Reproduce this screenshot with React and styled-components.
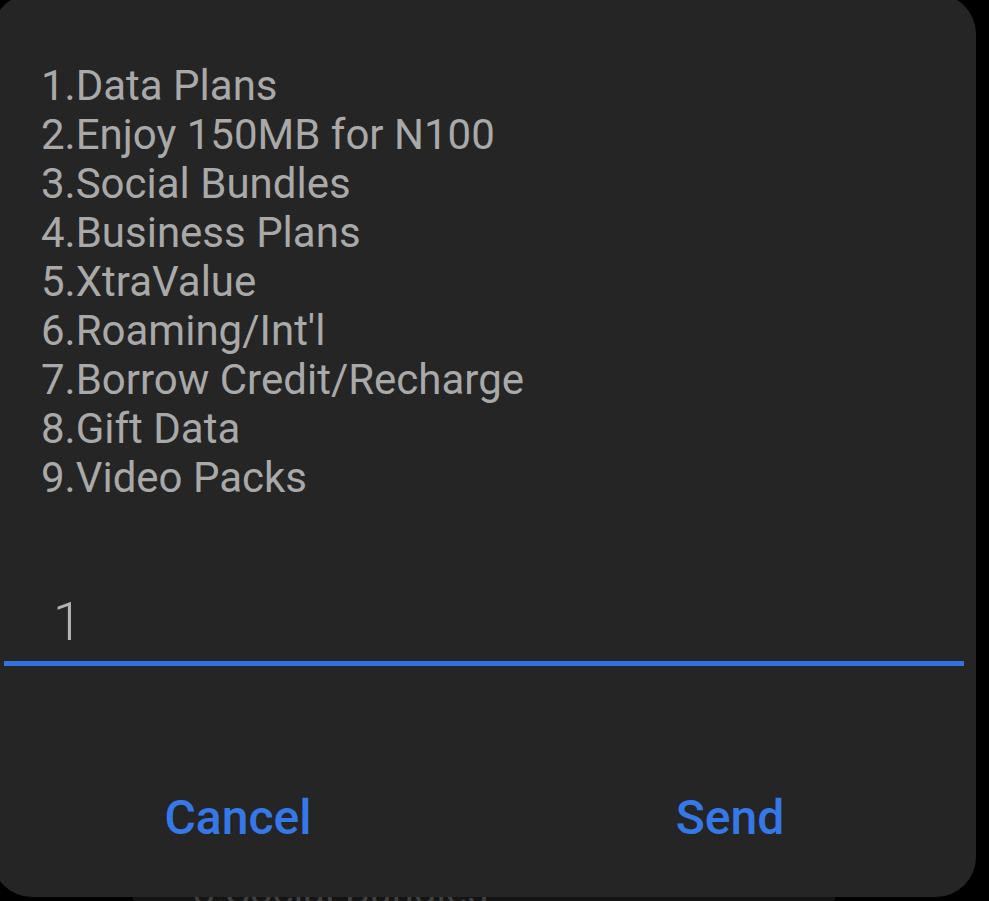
import React from 'react';
import styled, { createGlobalStyle } from 'styled-components';

const GlobalStyle = createGlobalStyle`
  html, body {
    margin: 0;
    padding: 0;
    background: #000;
  }
  body {
    font-family: Roboto, 'Noto Sans', sans-serif;
  }
`;

const Screen = styled.div`
  position: relative;
  width: 989px;
  height: 901px;
  overflow: hidden;
  background: #000;
`;

// the USSD page that sits behind the dialog, only its bottom edge peeks out
const BehindSheet = styled.div`
  position: absolute;
  left: 133px;
  top: 872px;
  width: 702px;
  height: 40px;
  background: #141414;
  color: #404040;
  font-size: 40px;
  line-height: 40px;
  padding-left: 60px;
  box-sizing: border-box;
  white-space: nowrap;
`;

const Dialog = styled.div`
  position: relative;
  margin: -6px 0 0 -8px;
  width: 984px;
  height: 903px;
  box-sizing: border-box;
  background: #252525;
  border-radius: 40px;
  display: flex;
  flex-direction: column;
  padding: 67px 12px 0;
`;

const MessageList = styled.div`
  padding-left: 37px;
  color: #a9a9a9;
  font-size: 42px;
  line-height: 49px;
  white-space: pre;
`;

const Line = styled.div`
  height: 49px;
`;

const InputField = styled.div`
  margin-top: 90px;
  padding: 0 0 9px 49px;
  border-bottom: 5px solid #3171e0;
  color: #b3b3b3;
  font-size: 53px;
  font-weight: 300;
  line-height: 60px;
  height: 60px;
`;

const Actions = styled.div`
  display: flex;
  margin: 0 -12px;
  padding-top: 124px;
`;

const ActionButton = styled.button`
  flex: 1;
  background: none;
  border: none;
  padding: 0;
  color: #3578e8;
  font-family: Roboto, 'Noto Sans', sans-serif;
  font-weight: 500;
  font-size: 48px;
  line-height: 56px;
  text-align: center;
  cursor: pointer;
`;

const options = [
  '1.Data Plans',
  '2.Enjoy 150MB for N100',
  '3.Social Bundles',
  '4.Business Plans',
  '5.XtraValue',
  "6.Roaming/Int'l",
  '7.Borrow Credit/Recharge',
  '8.Gift Data',
  '9.Video Packs',
];

export default function App() {
  return (
    <Screen>
      <GlobalStyle />
      <BehindSheet>3.Social Bundles</BehindSheet>
      <Dialog>
        <MessageList>
          {options.map((o) => (
            <Line key={o}>{o}</Line>
          ))}
        </MessageList>
        <InputField>1</InputField>
        <Actions>
          <ActionButton>Cancel</ActionButton>
          <ActionButton>Send</ActionButton>
        </Actions>
      </Dialog>
    </Screen>
  );
}
